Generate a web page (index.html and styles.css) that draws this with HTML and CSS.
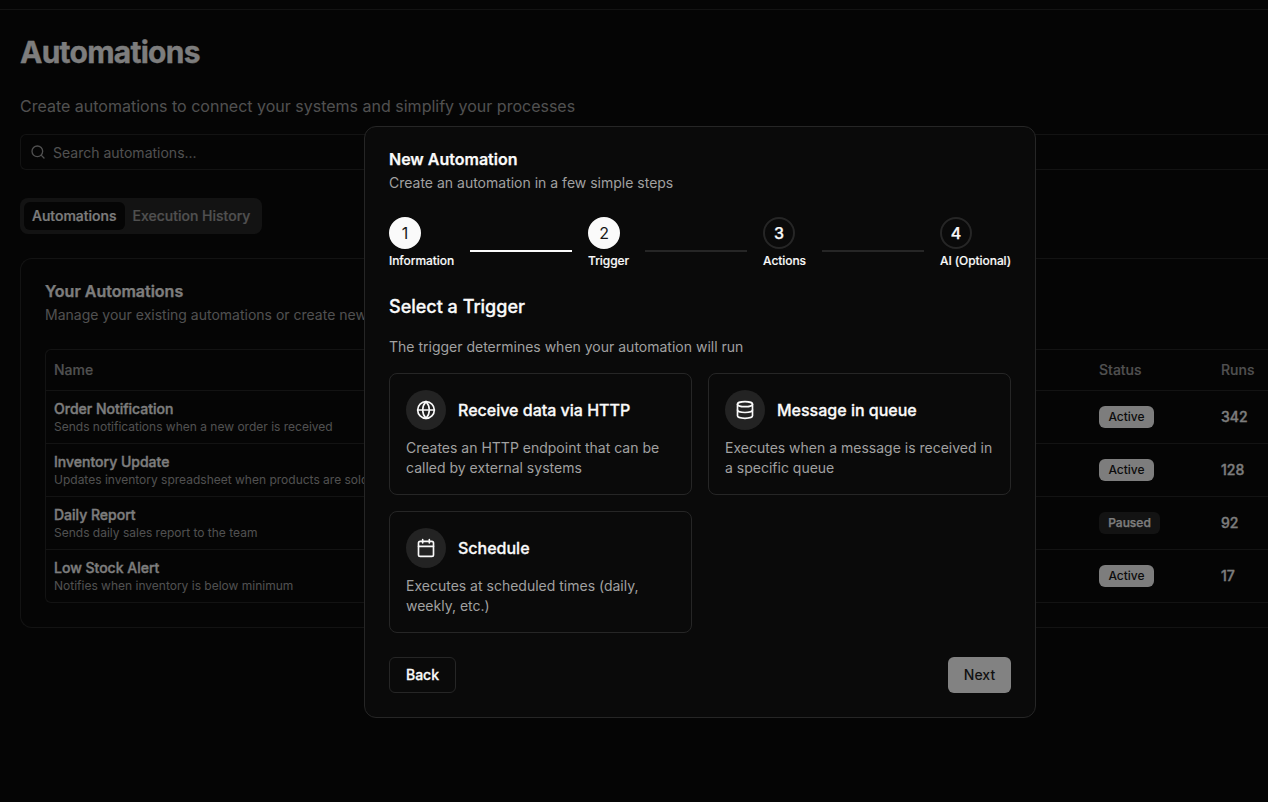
FILE: index.html
```html
<!DOCTYPE html>
<html lang="en">
<head>
<meta charset="utf-8">
<title>Automations</title>
<link rel="stylesheet" href="styles.css">
</head>
<body>
<div class="app">
  <header class="topbar"></header>
  <main class="page">
    <h1 class="page-title">Automations</h1>
    <p class="page-lead">Create automations to connect your systems and simplify your processes</p>
    <div class="search">
      <svg class="icon-sm" viewBox="0 0 24 24"><circle cx="11" cy="11" r="8"/><path d="m21 21-4.3-4.3"/></svg>
      <span class="search-text">Search automations...</span>
    </div>
    <div class="tabs">
      <span class="tab tab-active">Automations</span>
      <span class="tab">Execution History</span>
    </div>
    <section class="card">
      <h2 class="card-title">Your Automations</h2>
      <p class="card-desc">Manage your existing automations or create new ones</p>
      <div class="table">
        <div class="row head"><span>Name</span><span>Status</span><span>Runs</span></div>
        <div class="row"><div><p class="name">Order Notification</p><p class="note">Sends notifications when a new order is received</p></div><div><span class="badge">Active</span></div><span class="runs">342</span></div>
        <div class="row"><div><p class="name">Inventory Update</p><p class="note">Updates inventory spreadsheet when products are sold</p></div><div><span class="badge">Active</span></div><span class="runs">128</span></div>
        <div class="row"><div><p class="name">Daily Report</p><p class="note">Sends daily sales report to the team</p></div><div><span class="badge badge-muted">Paused</span></div><span class="runs">92</span></div>
        <div class="row"><div><p class="name">Low Stock Alert</p><p class="note">Notifies when inventory is below minimum</p></div><div><span class="badge">Active</span></div><span class="runs">17</span></div>
      </div>
    </section>
  </main>
</div>
<div class="overlay"></div>
<div class="dialog" role="dialog">
  <h2 class="dialog-title">New Automation</h2>
  <p class="dialog-desc">Create an automation in a few simple steps</p>
  <div class="steps">
    <div class="step"><span class="dot dot-on">1</span><span class="step-label">Information</span></div>
    <div class="line line-on"></div>
    <div class="step"><span class="dot dot-on">2</span><span class="step-label">Trigger</span></div>
    <div class="line"></div>
    <div class="step"><span class="dot">3</span><span class="step-label">Actions</span></div>
    <div class="line"></div>
    <div class="step"><span class="dot">4</span><span class="step-label">AI (Optional)</span></div>
  </div>
  <h3 class="section-title">Select a Trigger</h3>
  <p class="section-desc">The trigger determines when your automation will run</p>
  <div class="options">
    <div class="option">
      <div class="option-head">
        <span class="option-icon"><svg viewBox="0 0 24 24"><circle cx="12" cy="12" r="10"/><path d="M12 2a14.5 14.5 0 0 0 0 20 14.5 14.5 0 0 0 0-20"/><path d="M2 12h20"/></svg></span>
        <h4>Receive data via HTTP</h4>
      </div>
      <p>Creates an HTTP endpoint that can be called by external systems</p>
    </div>
    <div class="option">
      <div class="option-head">
        <span class="option-icon"><svg viewBox="0 0 24 24"><ellipse cx="12" cy="5" rx="9" ry="3"/><path d="M3 5v14a9 3 0 0 0 18 0V5"/><path d="M3 12a9 3 0 0 0 18 0"/></svg></span>
        <h4>Message in queue</h4>
      </div>
      <p>Executes when a message is received in a specific queue</p>
    </div>
    <div class="option">
      <div class="option-head">
        <span class="option-icon"><svg viewBox="0 0 24 24"><path d="M8 2v4M16 2v4"/><rect x="3" y="4" width="18" height="18" rx="2"/><path d="M3 10h18"/></svg></span>
        <h4>Schedule</h4>
      </div>
      <p>Executes at scheduled times (daily, weekly, etc.)</p>
    </div>
  </div>
  <div class="actions">
    <button class="btn">Back</button>
    <button class="btn btn-primary" disabled>Next</button>
  </div>
</div>
</body>
</html>
```

FILE: styles.css
```css
* { box-sizing: border-box; margin: 0; }
body {
  background: #0a0a0a;
  color: #fafafa;
  font: 14px/20px Inter, "Liberation Sans", sans-serif;
  height: 802px;
  overflow: hidden;
}
svg { fill: none; stroke: currentColor; stroke-width: 2; stroke-linecap: round; stroke-linejoin: round; flex: none; }

.app { height: 802px; overflow: hidden; }
.topbar { height: 10px; border-bottom: 1px solid #262626; }
.page { padding: 24px 0 24px 20px; }
.page-title { font-size: 30px; line-height: 36px; font-weight: 700; letter-spacing: -0.025em; -webkit-text-stroke: 0.3px; }
.page-lead { margin-top: 24px; font-size: 16px; line-height: 24px; color: #a1a1a1; }
.search {
  display: flex; align-items: center; gap: 7px;
  margin-top: 16px; height: 36px; padding: 0 9px;
  border: 1px solid #262626; border-right: 0; border-radius: 6px 0 0 6px; color: #a1a1a1;
}
.search-text { padding-top: 2px; }
.icon-sm { width: 16px; height: 16px; }
.tabs {
  display: inline-flex; align-items: center;
  margin-top: 28px; height: 36px; padding: 4px;
  background: #262626; border-radius: 8px;
}
.tab { height: 28px; padding: 4px 8px; border-radius: 6px; font-weight: 500; color: #a1a1a1; -webkit-text-stroke: 0.2px; }
.tab-active { background: #0a0a0a; color: #fafafa; }
.card { margin-top: 24px; height: 370px; padding: 24px 0 24px 24px; border: 1px solid #262626; border-right: 0; border-radius: 12px 0 0 12px; }
.card-title { font-size: 16px; line-height: 16px; font-weight: 600; -webkit-text-stroke: 0.25px; }
.card-desc { margin-top: 6px; color: #a1a1a1; }
.table { margin-top: 24px; border: 1px solid #262626; border-right: 0; border-radius: 6px 0 0 6px; }
.row {
  display: grid; grid-template-columns: 1045px 122px 1fr; align-items: center;
  height: 53px; padding-left: 8px; font-weight: 500;
  border-bottom: 1px solid #262626;
}
.row:last-child { height: 52px; border-bottom: 0; }
.head { height: 41px; color: #a1a1a1; -webkit-text-stroke: 0.15px; }
.name, .runs { -webkit-text-stroke: 0.3px; }
.note { font-size: 12px; line-height: 16px; font-weight: 400; color: #a1a1a1; }
.badge {
  display: block; width: 55px; padding: 3px 0; border-radius: 6px; text-align: center;
  font-size: 12px; line-height: 16px; font-weight: 450; background: #fafafa; color: #171717;
}
.badge-muted { width: 61px; background: #262626; color: #fafafa; font-weight: 500; -webkit-text-stroke: 0.25px; }

.overlay { position: fixed; inset: 0; background: rgba(0, 0, 0, 0.5); }
.dialog {
  position: fixed; left: 364px; top: 126px; width: 672px; height: 592px;
  padding: 24px; background: #0a0a0a; border: 1px solid #262626; border-radius: 12px;
}
.dialog-title { font-size: 16px; line-height: 16px; font-weight: 600; -webkit-text-stroke: 0.25px; }
.dialog-desc { margin-top: 6px; color: #a1a1a1; }
.steps { display: flex; align-items: center; margin-top: 24px; }
.dot {
  display: flex; align-items: center; justify-content: center;
  width: 32px; height: 32px; border: 2px solid #262626; border-radius: 50%;
  font-size: 16px; line-height: 24px; font-weight: 500; -webkit-text-stroke: 0.25px;
}
.dot-on { background: #fafafa; border-color: #fafafa; color: #171717; font-weight: 400; -webkit-text-stroke: 0; }
.step-label { display: block; margin-top: 4px; font-size: 12px; line-height: 16px; font-weight: 500; letter-spacing: -0.07px; -webkit-text-stroke: 0.15px; }
.line { flex: 1; height: 2px; margin: 16px 16px 0; background: #262626; }
.line-on { background: #fafafa; }
.section-title { margin-top: 24px; font-size: 18px; line-height: 28px; font-weight: 500; -webkit-text-stroke: 0.3px; }
.section-desc { margin-top: 16px; color: #a1a1a1; }
.options { display: grid; grid-template-columns: 1fr 1fr; gap: 16px; margin-top: 16px; }
.option { height: 122px; padding: 16px; border: 1px solid #262626; border-radius: 8px; color: #a1a1a1; }
.option-head { display: flex; align-items: center; gap: 12px; margin-bottom: 8px; color: #fafafa; }
.option-head h4 { font-size: 16px; line-height: 24px; font-weight: 500; -webkit-text-stroke: 0.3px; }
.option-icon { display: flex; align-items: center; justify-content: center; width: 40px; height: 40px; border-radius: 50%; background: #232323; }
.option-icon svg { width: 20px; height: 20px; }
.actions { display: flex; justify-content: space-between; margin-top: 24px; }
.btn {
  width: 67px; height: 36px; padding: 0; border: 1px solid #262626; border-radius: 6px; text-align: center;
  background: #0a0a0a; color: #fafafa; font: 500 14px/20px Inter, "Liberation Sans", sans-serif; -webkit-text-stroke: 0.3px;
}
.btn-primary { width: 63px; border: 0; background: #fafafa; color: #171717; opacity: 0.5; font-weight: 450; -webkit-text-stroke: 0; }
```
